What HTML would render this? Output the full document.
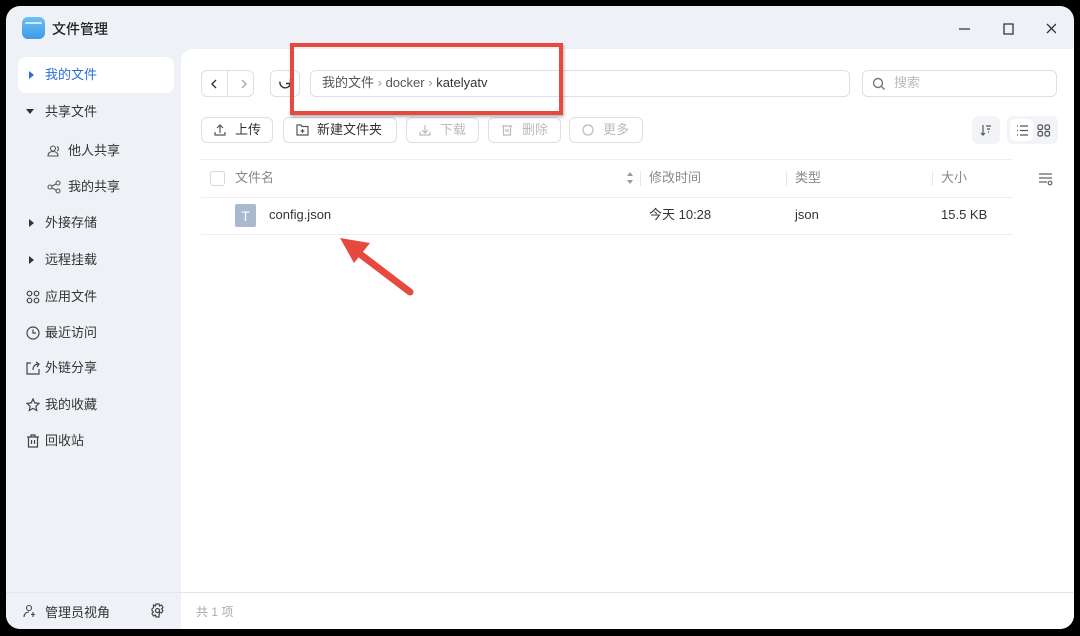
<!DOCTYPE html>
<html><head><meta charset="utf-8"><style>
*{box-sizing:border-box;margin:0;padding:0}
body{width:1080px;height:636px;background:#000;font-family:"Liberation Sans","Noto Sans CJK SC",sans-serif;position:relative;overflow:hidden;color:#333}
.win{position:absolute;left:6px;top:6px;width:1068px;height:623px;background:#eef1f6;border-radius:14px;overflow:hidden}
.abs{position:absolute}
.title{left:46px;top:13px;font-size:14px;color:#222;font-weight:500}
.logo{left:16px;top:11px;width:23px;height:22px;border-radius:6px;background:linear-gradient(#6cc0f5,#3d9be8)}
.logo:after{content:"";position:absolute;left:3px;top:5px;width:17px;height:2px;background:#cfe9fb;border-radius:1px}
.main{left:175px;top:43px;width:893px;height:543px;background:#fff;border-top-left-radius:12px}
.nav{position:absolute;left:12px;font-size:13px;color:#333;height:36px;line-height:36px;width:156px;padding-left:27px}
.nav.sel{background:#fff;border-radius:8px;color:#2a6fd8}
.nav svg{position:absolute;left:8px;top:11px}
.tri{position:absolute;left:11px;top:14px;width:0;height:0;border-left:5px solid #333;border-top:4px solid transparent;border-bottom:4px solid transparent}
.btn{position:absolute;border:1px solid #dcdfe4;border-radius:6px;background:#fff;font-size:13px;height:26px;line-height:24px;color:#333}
.dis{color:#bbb}
.foot{left:0;top:586px;width:1068px;height:37px;border-top:1px solid #e2e5ea;background:#eef1f6}
.th{font-size:13px;color:#888;line-height:16px}
.td{font-size:13px;color:#333;line-height:16px}
</style></head><body>
<div class="win">
<div class="abs logo"></div>
<div class="abs title">文件管理</div>
<svg class="abs" style="left:950px;top:15px" width="100" height="16" viewBox="0 0 100 16" fill="none" stroke="#333" stroke-width="1.3"><path d="M3 8h11"/><path d="M48 3h9v10h-9z"/><path d="M91 3l9 9M100 3l-9 9"/></svg>

<div class="nav sel" style="top:51px"><span class="tri" style="border-left-color:#2a6fd8"></span>我的文件</div>
<div class="nav" style="top:88px"><span class="abs" style="left:8px;top:15px;border-top:5px solid #333;border-left:4px solid transparent;border-right:4px solid transparent"></span>共享文件</div>
<div class="nav" style="top:127px;padding-left:50px"><svg style="left:29px" width="14" height="14" viewBox="0 0 14 14" fill="none" stroke="#555" stroke-width="1.1"><circle cx="6" cy="4.5" r="2.5"/><path d="M1 12c0-3 2-4.5 5-4.5s5 1.5 5 4.5zM10 2.5a2.5 2.5 0 010 4.5"/></svg>他人共享</div>
<div class="nav" style="top:163px;padding-left:50px"><svg style="left:29px" width="14" height="14" viewBox="0 0 14 14" fill="none" stroke="#555" stroke-width="1.1"><circle cx="11" cy="3" r="2"/><circle cx="11" cy="11" r="2"/><circle cx="3" cy="7" r="2"/><path d="M5 6l4-2M5 8l4 2"/></svg>我的共享</div>
<div class="nav" style="top:199px"><span class="tri"></span>外接存储</div>
<div class="nav" style="top:236px"><span class="tri"></span>远程挂载</div>
<div class="nav" style="top:273px"><svg width="14" height="14" viewBox="0 0 14 14" fill="none" stroke="#444" stroke-width="1.2"><circle cx="3.5" cy="3.5" r="2.3"/><circle cx="10.5" cy="3.5" r="2.3"/><circle cx="3.5" cy="10.5" r="2.3"/><circle cx="10.5" cy="10.5" r="2.3"/></svg>应用文件</div>
<div class="nav" style="top:309px"><svg width="14" height="14" viewBox="0 0 14 14" fill="none" stroke="#444" stroke-width="1.2"><circle cx="7" cy="7" r="6"/><path d="M7 3.5V7h3"/></svg>最近访问</div>
<div class="nav" style="top:344px"><svg width="14" height="14" viewBox="0 0 14 14" fill="none" stroke="#444" stroke-width="1.2"><path d="M5 2H1v11h12V8M7 9c0-4 2-6 6-6M10 1l3 2-2 3"/></svg>外链分享</div>
<div class="nav" style="top:381px"><svg width="14" height="14" viewBox="0 0 14 14" fill="none" stroke="#444" stroke-width="1.2"><path d="M7 1l1.8 3.9 4.2.5-3.1 2.9.8 4.2L7 10.4 3.3 12.5l.8-4.2L1 5.4l4.2-.5z"/></svg>我的收藏</div>
<div class="nav" style="top:417px"><svg width="14" height="14" viewBox="0 0 14 14" fill="none" stroke="#444" stroke-width="1.2"><path d="M1 3h12M5 3V1h4v2M2.5 3v10h9V3M5.5 6v4M8.5 6v4"/></svg>回收站</div>

<div class="main abs">
<div class="btn" style="left:20px;top:21px;width:53px;height:27px"><span class="abs" style="left:25px;top:0;height:25px;border-left:1px solid #dcdfe4"></span><svg class="abs" style="left:7px;top:7px" width="40" height="12" viewBox="0 0 40 12" fill="none" stroke-width="1.4"><path d="M7 2L3 6l4 4" stroke="#333"/><path d="M33 2l4 4-4 4" stroke="#aaa"/></svg></div>
<div class="btn" style="left:89px;top:21px;width:30px;height:27px"><svg class="abs" style="left:7px;top:5px" width="15" height="15" viewBox="0 0 15 15" fill="none" stroke="#333" stroke-width="1.4"><path d="M12.5 7.5A5 5 0 112 5.5M12.5 3v4.5H8"/></svg></div>
<div class="btn" style="left:129px;top:21px;width:540px;height:27px;padding-left:11px;color:#555">我的文件 <span style="color:#999">›</span> docker <span style="color:#999">›</span> <span style="color:#333">katelyatv</span></div>
<div class="btn" style="left:681px;top:21px;width:195px;height:27px;padding-left:31px;color:#bbb"><svg class="abs" style="left:9px;top:6px" width="14" height="14" viewBox="0 0 14 14" fill="none" stroke="#777" stroke-width="1.4"><circle cx="6" cy="6" r="4.5"/><path d="M9.5 9.5l3 3"/></svg>搜索</div>

<div class="btn" style="left:20px;top:68px;width:72px;padding-left:33px"><svg class="abs" style="left:12px;top:6px" width="12" height="12" viewBox="0 0 12 12" fill="none" stroke="#555" stroke-width="1.2"><path d="M1 8v3h10V8M6 9V1M3 4l3-3 3 3"/></svg>上传</div>
<div class="btn" style="left:102px;top:68px;width:114px;padding-left:33px"><svg class="abs" style="left:12px;top:6px" width="13" height="12" viewBox="0 0 13 12" fill="none" stroke="#555" stroke-width="1.2"><path d="M1 1h4l1 1.5h6V11H1zM6.5 5v4M4.5 7h4"/></svg>新建文件夹</div>
<div class="btn dis" style="left:225px;top:68px;width:73px;padding-left:33px"><svg class="abs" style="left:12px;top:6px" width="12" height="12" viewBox="0 0 12 12" fill="none" stroke="#bbb" stroke-width="1.2"><path d="M1 8v3h10V8M6 1v8M3 6l3 3 3-3"/></svg>下载</div>
<div class="btn dis" style="left:307px;top:68px;width:73px;padding-left:33px"><svg class="abs" style="left:12px;top:6px" width="12" height="12" viewBox="0 0 12 12" fill="none" stroke="#bbb" stroke-width="1.2"><path d="M1 2h10M2.5 2v9h7V2M5 5v3M7 5v3"/></svg>删除</div>
<div class="btn dis" style="left:388px;top:68px;width:74px;padding-left:33px"><svg class="abs" style="left:12px;top:6px" width="12" height="12" viewBox="0 0 12 12" fill="none" stroke="#bbb" stroke-width="1.2"><circle cx="6" cy="6" r="5"/></svg>更多</div>

<div class="abs" style="left:791px;top:67px;width:28px;height:28px;background:#f2f4f7;border-radius:6px"><svg class="abs" style="left:8px;top:8px" width="12" height="12" viewBox="0 0 12 12" fill="none" stroke="#555" stroke-width="1.2"><path d="M3 1v10M1 9l2 2 2-2M6 2h5M7 5h3M8 8h1"/></svg></div>
<div class="abs" style="left:826px;top:67px;width:51px;height:28px;background:#f2f4f7;border-radius:6px"><div class="abs" style="left:3px;top:3px;width:23px;height:22px;background:#fff;border-radius:5px"></div><svg class="abs" style="left:9px;top:8px" width="40" height="13" viewBox="0 0 40 13" fill="none" stroke="#555" stroke-width="1.2"><path d="M1 2h1M1 6.5h1M1 11h1M4 2h8M4 6.5h8M4 11h8"/><rect x="22" y="1" width="4.5" height="4.5" rx="1.5"/><rect x="29" y="1" width="4.5" height="4.5" rx="1.5"/><rect x="22" y="7.5" width="4.5" height="4.5" rx="1.5"/><rect x="29" y="7.5" width="4.5" height="4.5" rx="1.5"/></svg></div>

<div class="abs" style="left:20px;top:110px;width:812px;border-top:1px solid #eceef1"></div>
<div class="abs" style="left:20px;top:148px;width:812px;border-top:1px solid #eceef1"></div>
<div class="abs" style="left:20px;top:185px;width:812px;border-top:1px solid #eceef1"></div>
<div class="abs" style="left:29px;top:122px;width:15px;height:15px;border:1px solid #d5d8dd;border-radius:3px"></div>
<div class="abs th" style="left:54px;top:121px">文件名</div>
<svg class="abs" style="left:445px;top:122px" width="8" height="14" viewBox="0 0 8 14" fill="#999"><path d="M4 1l3 4H1zM4 13l3-4H1z"/></svg>
<div class="abs" style="left:459px;top:122px;height:15px;border-left:1px solid #e5e7ea"></div>
<div class="abs th" style="left:468px;top:121px">修改时间</div>
<div class="abs" style="left:605px;top:122px;height:15px;border-left:1px solid #e5e7ea"></div>
<div class="abs th" style="left:614px;top:121px">类型</div>
<div class="abs" style="left:751px;top:122px;height:15px;border-left:1px solid #e5e7ea"></div>
<div class="abs th" style="left:760px;top:121px">大小</div>
<svg class="abs" style="left:857px;top:124px" width="15" height="13" viewBox="0 0 15 13" fill="none" stroke="#666" stroke-width="1.2"><path d="M1 1h13M1 5h13M1 9h8"/><circle cx="12" cy="10" r="1.8"/></svg>

<div class="abs" style="left:54px;top:155px;width:21px;height:23px;background:#a9b9cf;border-radius:2px;color:#fff;font-size:14px;text-align:center;line-height:24px">T</div>
<div class="abs td" style="left:88px;top:158px">config.json</div>
<div class="abs td" style="left:468px;top:158px">今天 10:28</div>
<div class="abs td" style="left:614px;top:158px">json</div>
<div class="abs td" style="left:760px;top:158px">15.5 KB</div>
</div>

<div class="abs" style="left:284px;top:37px;width:273px;height:72px;border:4px solid #e8493f;box-shadow:1px 2px 3px rgba(0,0,0,.3)"></div>
<svg class="abs" style="left:328px;top:224px" width="85" height="70" viewBox="0 0 85 70"><path d="M76 62L22 21" stroke="#e8493f" stroke-width="7" stroke-linecap="round"/><path d="M6 8l30 5-16 20z" fill="#e8493f"/></svg>

<div class="abs foot"></div>
<div class="abs" style="left:175px;top:587px;width:893px;height:36px;background:#fff"></div>
<div class="abs" style="left:190px;top:597px;font-size:12px;color:#aaa">共 1 项</div>
<svg class="abs" style="left:17px;top:598px" width="14" height="14" viewBox="0 0 14 14" fill="none" stroke="#444" stroke-width="1.1"><circle cx="6" cy="4" r="2.5"/><path d="M1 13c0-3 2-5 5-5M10 8v5M8 10.5h4"/></svg>
<div class="abs" style="left:39px;top:596px;font-size:13px;color:#333">管理员视角</div>
<svg class="abs" style="left:144px;top:597px" width="15" height="15" viewBox="0 0 15 15" fill="none" stroke="#444" stroke-width="1.2"><circle cx="7.5" cy="7.5" r="2"/><path d="M6 1h3l.5 2 2-1 1.5 2.5-1.5 1.5 1.5 1.5-1.5 2.5-2-1L9 14H6l-.5-2-2 1L2 10.5 3.5 9 2 7.5 2 6 3.5 4.5 3.5 2l2 1z"/></svg>
</div>
</body></html>
